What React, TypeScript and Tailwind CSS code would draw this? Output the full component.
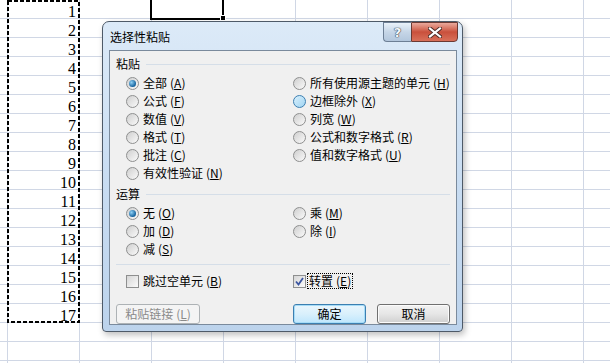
import React from 'react'

const ROWS = Array.from({ length: 20 }, (_, i) => i)
const COLS = Array.from({ length: 8 }, (_, i) => i)

function Radio({ checked, hot }: { checked?: boolean; hot?: boolean }) {
  return (
    <span
      className={`inline-flex h-[13px] w-[13px] shrink-0 items-center justify-center rounded-full border ${
        hot
          ? 'border-[#3c7fb1] bg-gradient-to-br from-[#d9f0fc] to-[#9fd4f2]'
          : 'border-[#8e8f8f] bg-gradient-to-br from-[#cfcfcf] to-[#fafafa]'
      }`}
    >
      {checked && (
        <span className="h-[7px] w-[7px] rounded-full bg-[radial-gradient(circle_at_35%_35%,#8fd0f5,#0b5a97_75%)]" />
      )}
    </span>
  )
}

function Check({ checked }: { checked?: boolean }) {
  return (
    <span className="inline-flex h-[13px] w-[13px] shrink-0 items-center justify-center border border-[#8e8f8f] bg-gradient-to-br from-[#d6d6d6] to-[#fbfbfb]">
      {checked && (
        <svg width="9" height="9" viewBox="0 0 9 9">
          <path d="M1 4.5 L3.5 7.5 L8 1" fill="none" stroke="#3b55a0" strokeWidth="1.8" />
        </svg>
      )}
    </span>
  )
}

function Key({ label, k }: { label: string; k: string }) {
  return (
    <span className="whitespace-nowrap">
      {label}
      <span className="ml-[3px]">
        (<span className="underline underline-offset-1">{k}</span>)
      </span>
    </span>
  )
}

function Option({ label, k, checked, hot }: { label: string; k: string; checked?: boolean; hot?: boolean }) {
  return (
    <div className="flex h-[18px] items-center gap-[4px]">
      <Radio checked={checked} hot={hot} />
      <Key label={label} k={k} />
    </div>
  )
}

function GroupHead({ title }: { title: string }) {
  return (
    <div className="flex h-[14px] items-center pl-[6px] pr-[6px]">
      <span>{title}</span>
      <span className="ml-[6px] h-px flex-1 bg-[#d5dee8]" />
    </div>
  )
}

function Sheet() {
  return (
    <div className="flex flex-col">
      {ROWS.map((r) => (
        <div key={r} className="flex h-[19px] border-b border-[#d0d7e5]">
          <div className="w-[8px] shrink-0 border-r border-[#d0d7e5]" />
          {COLS.map((c) => (
            <div
              key={c}
              className="flex w-[72px] shrink-0 items-end justify-end border-r border-[#d0d7e5] pr-[3px] font-['Liberation_Serif',serif] text-[16px] leading-[12px]"
            >
              {c === 0 && r < 17 ? r + 1 : ''}
            </div>
          ))}
          <div className="flex-1" />
        </div>
      ))}
    </div>
  )
}

export default function App() {
  return (
    <div className="relative h-[363px] w-[610px] overflow-hidden bg-white font-['Noto_Sans_CJK_SC','Noto_Sans',sans-serif] text-[12px] text-black">
      <Sheet />

      {/* copy selection */}
      <svg className="absolute left-[6px] top-[-1px]" width="75" height="325">
        <rect x="2" y="2" width="71" height="321" fill="none" stroke="#000" strokeWidth="2" strokeDasharray="4 2" />
      </svg>

      {/* active cell */}
      <div className="absolute left-[150px] top-[-2px] h-[22px] w-[74px] border-2 border-black" />
      <div className="absolute left-[220px] top-[15px] h-[6px] w-[6px] border border-white bg-black" />

      {/* dialog */}
      <div className="absolute left-[102px] top-[21px] flex h-[311px] w-[361px] flex-col rounded-t-[7px] rounded-b-[4px] border border-[#4e5a68] bg-gradient-to-b from-[#dceaf8] via-[#c9ddf2] to-[#bcd3ec] shadow-[2px_3px_6px_rgba(0,0,0,0.25)]">
        <div className="flex h-[29px] items-start">
          <span className="ml-[7px] mt-[8px] leading-[14px]">选择性粘贴</span>
          <div className="ml-auto mr-[4px] flex">
            <div className="flex h-[20px] w-[28px] items-center justify-center rounded-bl-[4px] border border-r-0 border-[#6d7f95] bg-gradient-to-b from-[#e9f1f9] via-[#c6d6e7] to-[#b3c7dd]">
              <span className="font-['DejaVu_Sans',sans-serif] text-[13px] font-bold leading-none text-[#f4f7fb] [text-shadow:0_0_1px_#3a4656,0_0_1px_#3a4656,0_0_1px_#3a4656]">
                ?
              </span>
            </div>
            <div className="flex h-[20px] w-[47px] items-center justify-center rounded-br-[4px] border border-[#6b3a33] bg-gradient-to-b from-[#e9a99c] via-[#c9503c] to-[#d8705a]">
              <svg width="14" height="11" viewBox="0 0 14 11">
                <path d="M2 1.5 L12 9.5 M12 1.5 L2 9.5" stroke="#4a2a26" strokeWidth="4" strokeLinecap="square" />
                <path d="M2 1.5 L12 9.5 M12 1.5 L2 9.5" stroke="#ffffff" strokeWidth="2.2" strokeLinecap="square" />
              </svg>
            </div>
          </div>
        </div>

        <div className="mb-[6px] ml-[6px] mr-[5px] flex flex-1 flex-col border border-[#7a8a9c] bg-[#f0f0f0] pt-[6px]">
          <GroupHead title="粘贴" />
          <div className="mt-[3px] flex">
            <div className="flex w-[183px] flex-col pl-[16px]">
              <Option label="全部" k="A" checked />
              <Option label="公式" k="F" />
              <Option label="数值" k="V" />
              <Option label="格式" k="T" />
              <Option label="批注" k="C" />
              <Option label="有效性验证" k="N" />
            </div>
            <div className="flex flex-col">
              <Option label="所有使用源主题的单元" k="H" />
              <Option label="边框除外" k="X" hot />
              <Option label="列宽" k="W" />
              <Option label="公式和数字格式" k="R" />
              <Option label="值和数字格式" k="U" />
            </div>
          </div>

          <div className="mt-[5px]">
            <GroupHead title="运算" />
          </div>
          <div className="mt-[3px] flex">
            <div className="flex w-[183px] flex-col pl-[16px]">
              <Option label="无" k="O" checked />
              <Option label="加" k="D" />
              <Option label="减" k="S" />
            </div>
            <div className="flex flex-col">
              <Option label="乘" k="M" />
              <Option label="除" k="I" />
            </div>
          </div>

          <div className="mx-[6px] mt-[6px] h-px bg-[#d5dee8]" />

          <div className="mt-[7px] flex h-[18px] items-center">
            <div className="flex w-[183px] items-center gap-[4px] pl-[16px]">
              <Check />
              <Key label="跳过空单元" k="B" />
            </div>
            <div className="flex items-center gap-[1px]">
              <Check checked />
              <span className="border border-dotted border-black px-[1px] leading-[14px]">
                <Key label="转置" k="E" />
              </span>
            </div>
          </div>

          <div className="mt-[14px] flex pl-[6px]">
            <div className="flex h-[20px] w-[84px] items-center justify-center rounded-[3px] border border-[#adb2b5] bg-[#f4f4f4] text-[#8a8a8a]">
              <Key label="粘贴链接" k="L" />
            </div>
            <div className="ml-[93px] flex h-[20px] w-[73px] items-center justify-center rounded-[3px] border border-[#3c7fb1] bg-gradient-to-b from-[#eaf6fd] via-[#d9f0fc] to-[#bee6fd] shadow-[inset_0_0_0_1px_#a6dcf7]">
              确定
            </div>
            <div className="ml-[11px] flex h-[20px] w-[73px] items-center justify-center rounded-[3px] border border-[#707070] bg-gradient-to-b from-[#f2f2f2] via-[#e6e6e6] to-[#cfcfcf] shadow-[inset_0_0_0_1px_#fbfbfb]">
              取消
            </div>
          </div>
        </div>
      </div>
    </div>
  )
}
